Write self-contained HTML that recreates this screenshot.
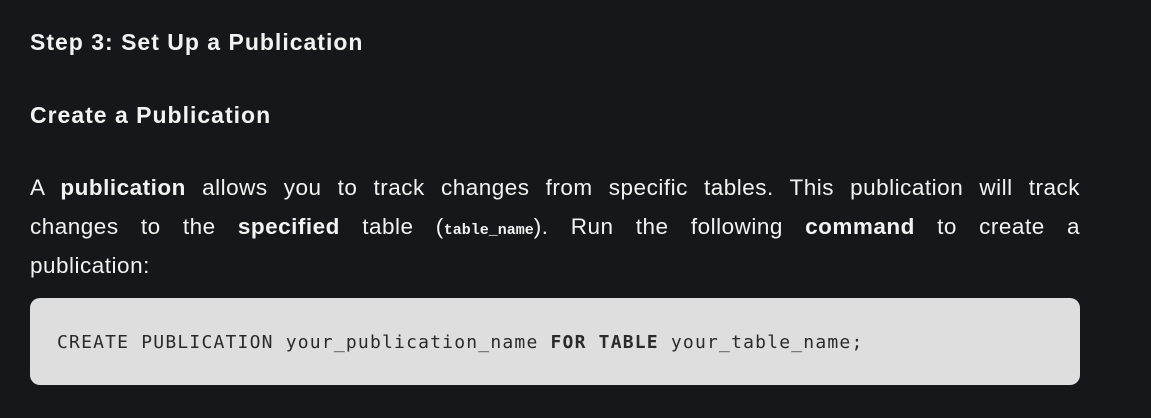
<!DOCTYPE html>
<html><head><meta charset="utf-8"><style>
html,body{margin:0;padding:0;background:#16171b;width:1151px;height:418px;overflow:hidden}
body{font-family:"Liberation Sans",sans-serif;color:#f2f2f2;position:relative}
h3{position:absolute;left:30px;margin:0;font-size:23px;font-weight:bold;letter-spacing:1px}
.p{position:absolute;left:30px;top:168px;width:1050px;font-size:22.5px;line-height:39px;letter-spacing:0.5px}
.l{display:block;height:39px;text-align:justify;text-align-last:justify;white-space:nowrap}
.l3{display:block;height:39px}
code{font-family:"Liberation Mono",monospace;font-size:15px;font-weight:bold;letter-spacing:0}
.code{position:absolute;left:30px;top:298px;width:1050px;height:87px;background:#dedede;border-radius:10px;color:#2a2a2a;font-family:"DejaVu Sans Mono","Liberation Mono",monospace;font-size:18px;letter-spacing:1.2px;line-height:89px;text-indent:27px;white-space:pre}
</style></head><body>
<h3 style="top:29px">Step 3: Set Up a Publication</h3>
<h3 style="top:102px">Create a Publication</h3>
<div class="p">
<span class="l">A <b>publication</b> allows you to track changes from specific tables. This publication will track</span>
<span class="l">changes to the <b>specified</b> table (<code>table_name</code>). Run the following <b>command</b> to create a</span>
<span class="l3">publication:</span>
</div>
<div class="code">CREATE PUBLICATION your_publication_name <b>FOR TABLE</b> your_table_name;</div>
</body></html>
